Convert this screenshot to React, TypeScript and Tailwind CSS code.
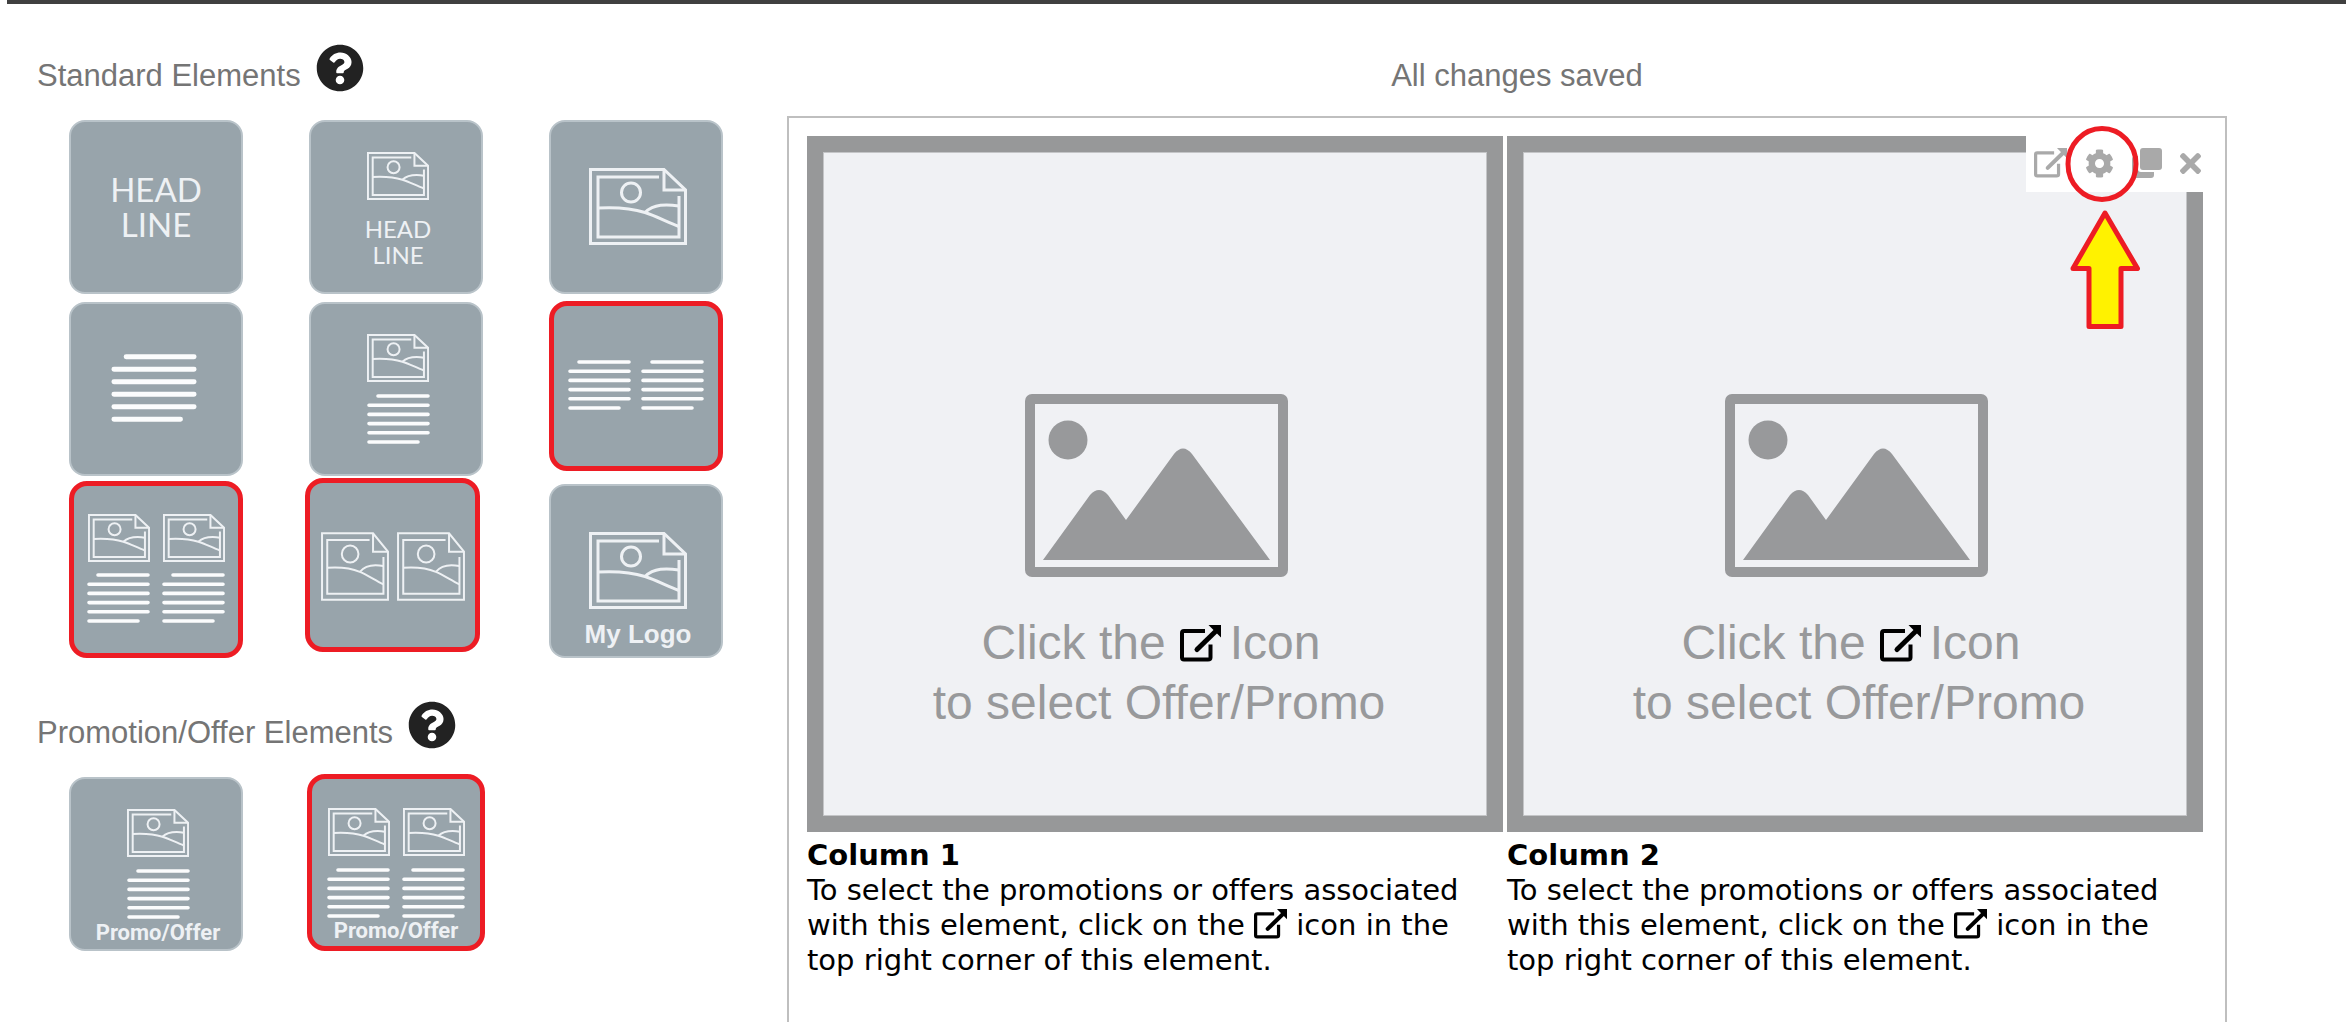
import type { ReactNode } from "react";
import { FaCog, FaQuestionCircle, FaTimes } from "react-icons/fa";

function PictureArt({ className, sunWidth = 9.5 }: { className: string; sunWidth?: number }) {
  return (
    <svg
      viewBox="0 0 98 77"
      preserveAspectRatio="none"
      fill="none"
      stroke="#eef1f4"
      className={className}
      aria-hidden="true"
    >
      <path vectorEffect="non-scaling-stroke" d="M1.5 1.5H75L96.5 22V75.5H1.5Z" />
      <path vectorEffect="non-scaling-stroke" d="M75 1.5V22H96.5" />
      <path vectorEffect="non-scaling-stroke" d="M70 9H9V69H90V28" />
      <ellipse vectorEffect="non-scaling-stroke" cx="42" cy="24.5" rx={sunWidth} ry="9.500" />
      <path vectorEffect="non-scaling-stroke" d="M9 40C27 39 42 40 56 44.500C67 48 78 54 90 58.500" />
      <path vectorEffect="non-scaling-stroke" d="M56 44.500C65 36 77 36 90 38" />
    </svg>
  );
}

function LinesArt({ className }: { className: string }) {
  return (
    <svg viewBox="0 0 63 50" className={className} fill="none" stroke="#fbfcfd" strokeWidth="3.600" strokeLinecap="round" aria-hidden="true">
      <path d="M11 2H61M2 11.200H61M2 20.400H61M2 29.600H61M2 38.800H61M2 48H51" />
    </svg>
  );
}

function OpenIcon({ className }: { className: string }) {
  return (
    <svg viewBox="0 0 41 37" className={className} fill="none" stroke="currentColor" aria-hidden="true">
      <path d="M25 6H4Q2 6 2 8V32.500Q2 34.500 4 34.500H28Q30.500 34.500 30.500 32.500V19.500" strokeWidth="4" />
      <path d="M17 24.500L36 6" strokeWidth="5" strokeLinecap="round" />
      <path d="M28.500 0H41V12.500Z" fill="currentColor" stroke="none" />
    </svg>
  );
}

function CopyIcon({ className }: { className: string }) {
  return (
    <svg viewBox="0 0 30 30" className={className} fill="currentColor" aria-hidden="true">
      <rect x="8" y="0" width="22" height="22" rx="3" />
      <path d="M0 11Q0 8 3 8H6V21Q6 24 9 24H22V27Q22 30 19 30H3Q0 30 0 27Z" />
    </svg>
  );
}

const small = "h-12 w-[62px] shrink-0 stroke-2";
const large = "h-[77px] w-[98px] shrink-0 stroke-3";
const smallLines = "h-[50px] w-[63px] shrink-0";

function Tile({ label, place, children }: { label: string; place: string; children: ReactNode }) {
  return (
    <button
      type="button"
      aria-label={label}
      className={`flex flex-col items-center overflow-hidden bg-[#98a4ab] text-[#eef1f4] ${place}`}
    >
      {children}
    </button>
  );
}

const plain = "h-[174px] w-[174px] self-end justify-self-end rounded-2xl border-2 border-[#b9c3c9]";
const marked = "rounded-[18px] border-5 border-[#ed1c24]";

function SectionTitle({ children }: { children: ReactNode }) {
  return (
    <div className="flex items-start gap-[15px]">
      <h2 className="mt-[14px] text-[31px] leading-9 text-[#757575]">{children}</h2>
      <button type="button" aria-label="Help" className="text-[#222222]">
        <FaQuestionCircle className="size-12" />
      </button>
    </div>
  );
}

function Column({ title }: { title: string }) {
  return (
    <article className="min-w-0 flex-1">
      <div className="flex aspect-square flex-col items-center border-16 border-[#979899] bg-[#f0f1f4] pt-[242px] pl-[3px] text-[#98999b] shadow-[inset_0_0_0_1px_#c4c5c7]">
        <svg viewBox="0 0 263 183" className="h-[183px] w-[263px]" fill="currentColor" aria-hidden="true">
          <rect x="5" y="5" width="253" height="173" rx="2" fill="none" stroke="currentColor" strokeWidth="10" />
          <circle cx="43" cy="46" r="19.500" />
          <path d="M18 166L65 101Q74 91 83 101L101 126L149 60Q158 49 167 60L245 166Z" />
        </svg>
        <p className="mt-9 pl-[5px] text-center text-[48px] leading-[60px] whitespace-nowrap [font-variant-ligatures:none]">
          <span className="flex items-center justify-center pr-4">
            Click the
            <OpenIcon className="mr-[9px] ml-[14px] h-[37px] w-[41px] text-black" />
            Icon
          </span>
          to select Offer/Promo
        </p>
      </div>
      <div className="mt-1.5 font-['DejaVu_Sans',Verdana,sans-serif] text-[29px] leading-[35px] text-black [font-variant-ligatures:none]">
        <h3 className="font-bold">{title}</h3>
        <p>
          To select the promotions or offers associated with this element, click on the{" "}
          <OpenIcon className="inline-block h-[30px] w-[33px] align-[-4px]" /> icon in the top right corner of this
          element.
        </p>
      </div>
    </article>
  );
}

export default function App() {
  return (
    <div className="flex min-h-screen flex-col bg-white font-['Liberation_Sans',Arial,sans-serif]">
      <div className="ml-[7px] h-1 bg-[#404040]" />
      <main className="flex flex-1">
        <aside className="w-[787px] shrink-0 pt-10 pl-[37px]">
          <SectionTitle>Standard Elements</SectionTitle>
          <div className="mt-5 ml-7 grid auto-rows-[180px] grid-cols-[repeat(3,178px)] gap-x-[62px] gap-y-0.5">
            <Tile label="Headline" place={`${plain} pt-[50px]`}>
              <span className="font-[Lato] text-[33px] leading-[35px]">
                HEAD
                <br />
                LINE
              </span>
            </Tile>
            <Tile label="Picture with headline" place={`${plain} pt-[30px] pl-1`}>
              <PictureArt className={small} />
              <span className="mt-4 font-[Lato] text-2xl leading-[26px]">
                HEAD
                <br />
                LINE
              </span>
            </Tile>
            <Tile label="Picture" place={`${plain} pt-[46px] pl-1`}>
              <PictureArt className={large} />
            </Tile>
            <Tile label="Text" place={`${plain} pt-[50px] pr-1`}>
              <LinesArt className="h-[68px] w-[86px]" />
            </Tile>
            <Tile label="Picture with text" place={`${plain} pt-[30px] pl-1`}>
              <PictureArt className={small} />
              <LinesArt className={`mt-3 ${smallLines}`} />
            </Tile>
            <Tile label="Two text columns" place={`${marked} h-[170px] w-[174px] self-center justify-self-end pt-[54px]`}>
              <span className="flex gap-[10px]">
                <LinesArt className={smallLines} />
                <LinesArt className={smallLines} />
              </span>
            </Tile>
            <Tile label="Two picture and text columns" place={`${marked} h-[177px] w-[174px] self-end justify-self-end pt-7`}>
              <span className="flex gap-[13px]">
                <PictureArt className={small} />
                <PictureArt className={small} />
              </span>
              <span className="mt-[11px] flex gap-3">
                <LinesArt className={smallLines} />
                <LinesArt className={smallLines} />
              </span>
            </Tile>
            <Tile label="Two pictures" place={`${marked} h-[174px] w-[175px] self-start justify-self-start pt-[49px]`}>
              <span className="flex gap-2">
                <PictureArt sunWidth={12} className="h-[69px] w-[68px] shrink-0 stroke-2" />
                <PictureArt sunWidth={12} className="h-[69px] w-[68px] shrink-0 stroke-2" />
              </span>
            </Tile>
            <Tile label="My Logo" place={`${plain} pt-[46px] pl-1`}>
              <PictureArt className={large} />
              <span className="mt-[10px] text-[26px] leading-[30px] font-bold">My Logo</span>
            </Tile>
          </div>

          <div className="mt-[43px]">
            <SectionTitle>Promotion/Offer Elements</SectionTitle>
          </div>
          <div className="mt-5 ml-7 grid auto-rows-[180px] grid-cols-[repeat(2,178px)] gap-x-16">
            <Tile label="Promo/Offer" place={`${plain} pt-[30px] pl-1`}>
              <PictureArt className={small} />
              <LinesArt className={`mt-3 ${smallLines}`} />
              <span className="mt-0.5 font-[Roboto] text-[22px] leading-6 font-bold">Promo/Offer</span>
            </Tile>
            <Tile label="Two column Promo/Offer" place={`${marked} h-[177px] w-[178px] self-end justify-self-end pt-[29px]`}>
              <span className="flex gap-[13px]">
                <PictureArt className={small} />
                <PictureArt className={small} />
              </span>
              <span className="mt-3 flex gap-3">
                <LinesArt className={smallLines} />
                <LinesArt className={smallLines} />
              </span>
              <span className="mt-px font-[Roboto] text-[22px] leading-6 font-bold">Promo/Offer</span>
            </Tile>
          </div>
        </aside>

        <section className="mr-[119px] flex min-w-0 flex-1 flex-col pt-[54px]">
          <p className="pl-5 text-center text-[31px] leading-9 text-[#757575]">All changes saved</p>
          <div className="relative mt-[22px] flex-1 border-2 border-b-0 border-[#bfbfbf] pt-[18px] pr-[22px] pl-[18px]">
            <div className="flex gap-1">
              <Column title="Column 1" />
              <Column title="Column 2" />
            </div>

            <div className="absolute top-0 right-0 flex h-[74px] w-[199px] items-center gap-[18px] bg-white pt-4 pl-2 text-[#a9a9a9]">
              <button type="button" aria-label="Select offer">
                <OpenIcon className="h-[30px] w-[33px]" />
              </button>
              <button type="button" aria-label="Settings">
                <FaCog className="size-[29px]" />
              </button>
              <button type="button" aria-label="Duplicate">
                <CopyIcon className="size-[30px]" />
              </button>
              <button type="button" aria-label="Remove">
                <FaTimes className="h-[31px] w-[21px]" />
              </button>
            </div>

            <svg
              viewBox="0 0 76 206"
              className="pointer-events-none absolute top-[6px] right-[85px] h-[206px] w-[76px]"
              stroke="#ed1c24"
              strokeWidth="5"
              strokeLinejoin="round"
              aria-hidden="true"
            >
              <ellipse cx="38" cy="40" rx="34" ry="35.500" fill="none" />
              <path d="M41 89L73.500 144.500H57V202.500H25V144.500H9Z" fill="#fff200" />
            </svg>
          </div>
        </section>
      </main>
    </div>
  );
}
